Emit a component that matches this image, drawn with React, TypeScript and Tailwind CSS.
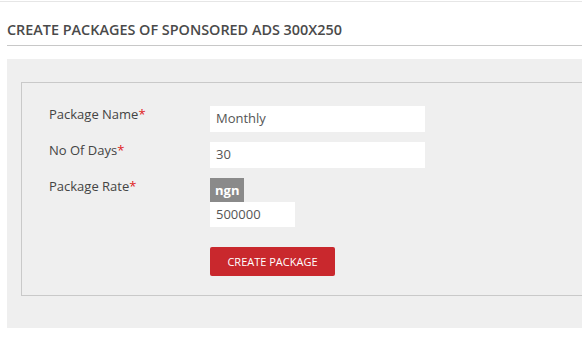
export default function App() {
  const font = { fontFamily: '"Open Sans", "Noto Sans", sans-serif' };
  return (
    <div className="w-[582px] h-[342px] overflow-hidden bg-white" style={font}>
      <div className="mt-[1px] border-t border-[#e6e6e6]" />
      <div className="pl-[7px]">
        <div className="w-[640px]">
          <h2 className="pt-[19px] pb-[6px] text-[14.4px] leading-[18px] font-semibold text-[#4a4a4a] border-b border-[#c8c8c8]">
            CREATE PACKAGES OF SPONSORED ADS 300X250
          </h2>
          <div className="mt-[13px] bg-[#efefef] pl-[14px] pt-[23px] pb-[32px]">
            <div className="border border-[#c9c9c9] pt-[23px] pb-[19px] pl-[27px]">
              <div className="flex h-[26px] mb-[10px]">
                <label className="w-[161px] text-[13px] leading-[16px] text-[#444]">
                  Package Name<span className="text-[#e02020]">*</span>
                </label>
                <div className="w-[215px] h-[26px] bg-white px-[6px] text-[13px] leading-[25px] text-[#555]">Monthly</div>
              </div>
              <div className="flex h-[26px] mb-[10px]">
                <label className="w-[161px] text-[13px] leading-[16px] text-[#444]">
                  No Of Days<span className="text-[#e02020]">*</span>
                </label>
                <div className="w-[215px] h-[26px] bg-white px-[6px] text-[13px] leading-[25px] text-[#555]">30</div>
              </div>
              <div className="flex mt-[1px]">
                <label className="w-[161px] text-[13px] leading-[16px] text-[#444]">
                  Package Rate<span className="text-[#e02020]">*</span>
                </label>
                <div className="flex flex-col items-start">
                  <span className="h-[24px] px-[5px] bg-[#8a8a8a] text-white font-bold text-[13px] leading-[24px]">ngn</span>
                  <div className="w-[85px] h-[25px] bg-white px-[6px] text-[13px] leading-[24px] text-[#555]">500000</div>
                  <button className="mt-[20px] w-[125px] h-[29px] bg-[#c9282d] rounded-[2px] text-white text-[11px] leading-[29px] text-center">
                    CREATE PACKAGE
                  </button>
                </div>
              </div>
            </div>
          </div>
        </div>
      </div>
    </div>
  );
}
